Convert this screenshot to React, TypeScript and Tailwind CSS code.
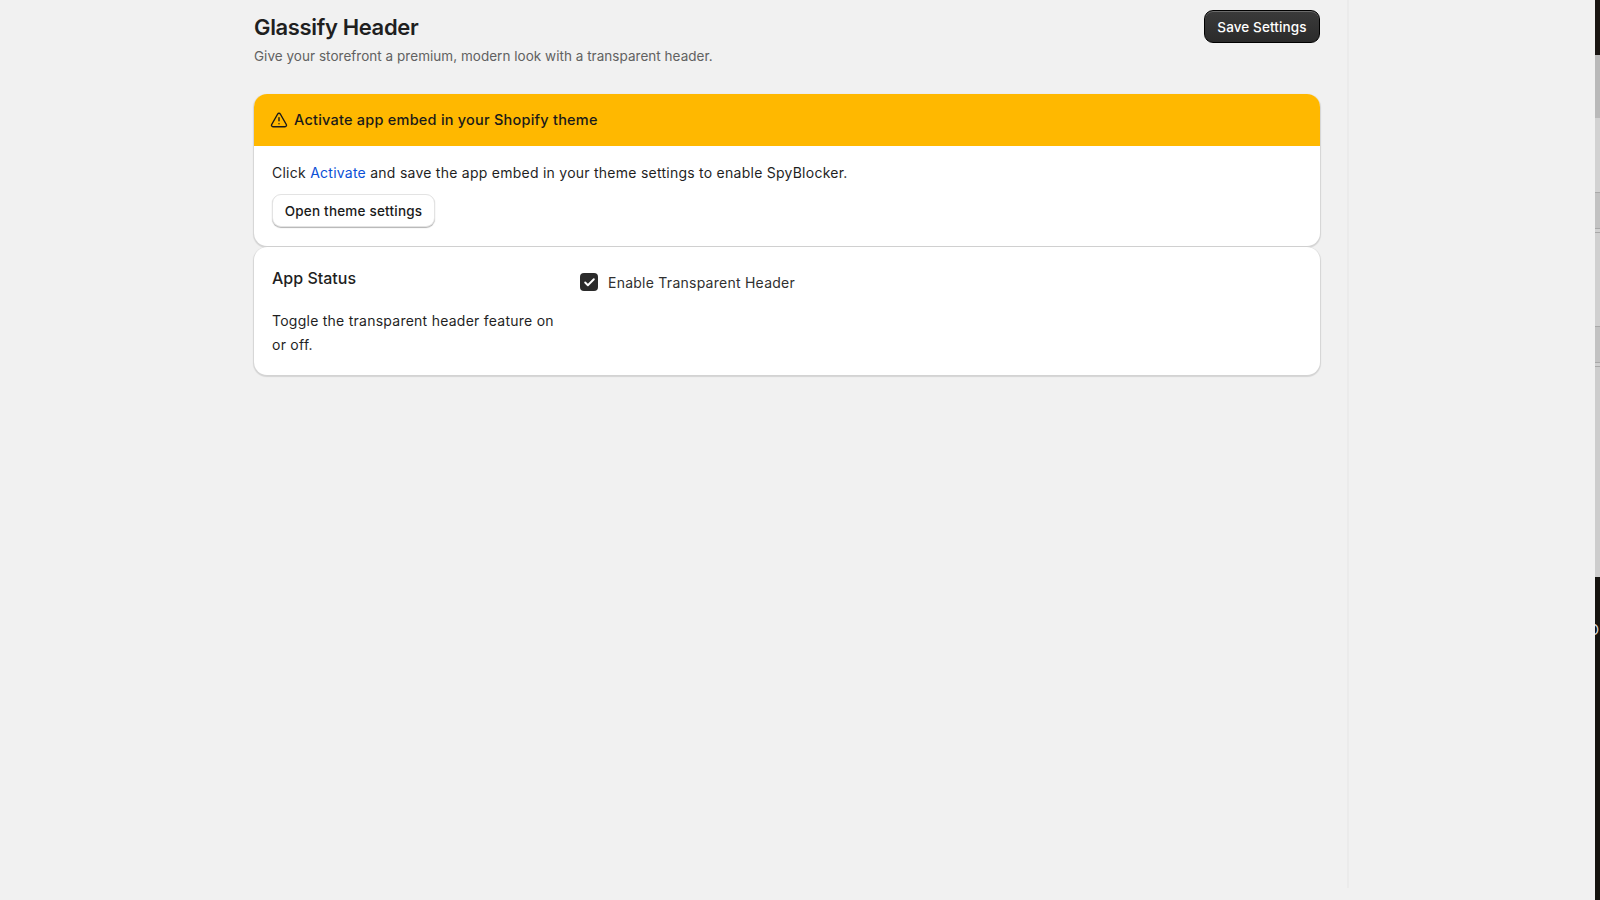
import { TriangleAlert, Check } from "lucide-react";

export default function App() {
  return (
    <div className="flex h-screen overflow-hidden bg-[#f1f1f1] font-['Inter',sans-serif] text-[#202223]">
      <div className="flex-1 min-w-0">
        <div className="flex h-[888px] w-[1349px] flex-col border-r-2 border-[#ebebeb] pl-[254px] pr-[27px]">
          <div className="flex items-start justify-between pt-[10px]">
            <div>
              <h1 className="mt-[4px] text-[22px] leading-[26px] font-semibold tracking-[-0.35px] text-[#1f1f1f]">Glassify Header</h1>
              <p className="mt-[6px] text-[13.5px] leading-[20px] tracking-[0.03px] text-[#616161]">Give your storefront a premium, modern look with a transparent header.</p>
            </div>
            <button className="h-[33px] w-[116px] rounded-[9px] border border-black bg-gradient-to-b from-[#3a3a3a] to-[#2b2b2b] pt-[1px] text-[13.5px] font-medium tracking-[0.11px] text-white shadow-[inset_0_1px_0_rgba(255,255,255,0.25)]">
              Save Settings
            </button>
          </div>

          <div className="mt-[28px] overflow-hidden rounded-[13px] bg-white shadow-[0_1px_1px_1px_rgba(0,0,0,0.12)]">
            <div className="flex h-[52px] items-center gap-[6px] bg-[#ffb800] pl-[16px]">
              <TriangleAlert className="h-[18px] w-[18px] text-[#1a1a1a]" strokeWidth={1.9} />
              <span className="text-[14.5px] font-[550] tracking-[0.23px] text-[#1a1a1a]">Activate app embed in your Shopify theme</span>
            </div>
            <div className="h-[100px] pl-[18px] pt-[16px]">
              <p className="text-[14px] leading-[22px] tracking-[0.25px] text-[#1f1f1f]">
                Click <span className="text-[#0a4fd6]">Activate</span> and save the app embed in your theme settings to enable SpyBlocker.
              </p>
              <button className="mt-[10px] h-[33px] w-[163px] rounded-[9px] border border-[#e3e3e3] bg-white pt-[1px] text-[13.5px] font-[450] tracking-[0.2px] text-[#1a1a1a] shadow-[0_1px_1px_rgba(0,0,0,0.3)]">
                Open theme settings
              </button>
            </div>
          </div>

          <div className="mt-[1px] flex h-[128px] rounded-[13px] bg-white pl-[18px] pt-[21px] shadow-[0_1px_1px_1px_rgba(0,0,0,0.12)]">
            <div className="w-[300px]">
              <h2 className="text-[16px] leading-[20px] font-[550] text-[#1f1f1f]">App Status</h2>
              <p className="mt-[21px] w-[290px] text-[14px] leading-[24px] tracking-[0.25px] text-[#1f1f1f]">Toggle the transparent header feature on or off.</p>
            </div>
            <label className="mt-[4px] flex h-[20px] items-center gap-[10px] pl-[8px]">
              <span className="flex h-[18px] w-[18px] items-center justify-center rounded-[4px] bg-[#2b2b2b]">
                <Check className="h-[13px] w-[13px] text-white" strokeWidth={3.5} />
              </span>
              <span className="text-[14px] tracking-[0.25px] text-[#303030]">Enable Transparent Header</span>
            </label>
          </div>
        </div>
      </div>

      {/* sliver of the window behind */}
      <div className="flex w-[5px] shrink-0 flex-col overflow-hidden">
        <div className="h-[55px] bg-[#1a1512]" />
        <div className="h-[63px] bg-[#b9b9b9]" />
        <div className="h-[74px] bg-[#d2d2d2]" />
        <div className="h-[36px] border-t border-[#a8a8a8] bg-[#c2c2c2]" />
        <div className="h-[4px] border-t border-[#a8a8a8] bg-[#d0d0d0]" />
        <div className="h-[94px] border-t border-[#a8a8a8] bg-[#d0d0d0]" />
        <div className="h-[36px] border-t border-[#a8a8a8] bg-[#c2c2c2]" />
        <div className="h-[4px] border-t border-[#a8a8a8] bg-[#d0d0d0]" />
        <div className="h-[211px] border-t border-[#a8a8a8] bg-[#cdcdcd]" />
        <div className="flex-1 overflow-hidden bg-[#15130f] pt-[45px]">
          <span className="-ml-[6px] block text-[14px] leading-[16px] text-[#d8d8d8]">D</span>
        </div>
      </div>
    </div>
  );
}
